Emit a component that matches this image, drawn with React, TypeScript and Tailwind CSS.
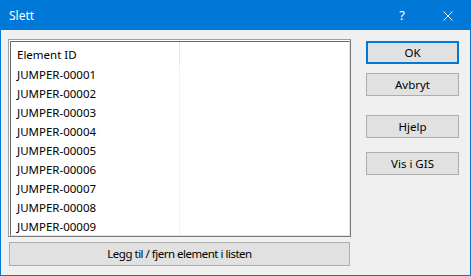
const rows = [
  'JUMPER-00001',
  'JUMPER-00002',
  'JUMPER-00003',
  'JUMPER-00004',
  'JUMPER-00005',
  'JUMPER-00006',
  'JUMPER-00007',
  'JUMPER-00008',
  'JUMPER-00009',
]

function DlgButton({ label, primary = false }: { label: string; primary?: boolean }) {
  return (
    <button
      className={`flex h-[23px] w-[93px] items-center justify-center bg-[#e1e1e1] text-[11.5px] text-black ${
        primary ? 'border-2 border-[#0078d7]' : 'border border-[#adadad]'
      }`}
    >
      {label}
    </button>
  )
}

export default function App() {
  return (
    <div
      className="flex h-[276px] w-[471px] flex-col border border-[#0078d7] bg-[#f0f0f0]"
      style={{ fontFamily: '"Noto Sans", "Liberation Sans", sans-serif' }}
    >
      {/* title bar */}
      <div className="flex h-[29px] shrink-0 items-center bg-[#0078d7] pl-[8px] text-white">
        <span className="text-[12px]">Slett</span>
        <span className="ml-auto mr-[38px] text-[13px]">?</span>
        <svg width="10" height="10" viewBox="0 0 10 10" className="mr-[17px] mt-[1px]">
          <path d="M0.5 0.5 L9.5 9.5 M9.5 0.5 L0.5 9.5" stroke="white" strokeWidth="1" />
        </svg>
      </div>

      <div className="flex flex-1 pl-[7px] pt-[9px]">
        <div className="flex w-[343px] flex-col">
          {/* list box */}
          <div className="h-[198px] border border-b-[#7a7a7a] border-l-[#a0a0a0] border-r-[#7a7a7a] border-t-[#a0a0a0] bg-white pl-[1px] pt-[1px]">
            <div className="flex h-full border border-b-[#e3e3e3] border-l-[#696969] border-r-[#e3e3e3] border-t-[#696969] text-[11.5px] text-black">
              <div className="flex w-[169px] flex-col border-r border-[#eaf2fb]">
                <div className="flex h-[23px] items-center pl-[6px] pt-[4px]">Element ID</div>
                {rows.map((r) => (
                  <div key={r} className="flex h-[19px] items-center pl-[6px] pt-[3px]">
                    {r}
                  </div>
                ))}
              </div>
              <div className="relative flex-1">
                <div className="absolute left-[-1px] top-0 h-[23px] w-px bg-[#e5e5e5]" />
              </div>
            </div>
          </div>
          <button className="ml-[1px] mt-[5px] flex h-[24px] w-[341px] items-center justify-center border border-[#adadad] bg-[#e1e1e1] text-[11.5px] tracking-[-0.5px] text-black">
            Legg til / fjern element i listen
          </button>
        </div>

        <div className="ml-[15px] flex flex-col pt-[2px]">
          <DlgButton label="OK" primary />
          <div className="mt-[9px]">
            <DlgButton label="Avbryt" />
          </div>
          <div className="mt-[19px]">
            <DlgButton label="Hjelp" />
          </div>
          <div className="mt-[14px]">
            <DlgButton label="Vis i GIS" />
          </div>
        </div>
      </div>
    </div>
  )
}
